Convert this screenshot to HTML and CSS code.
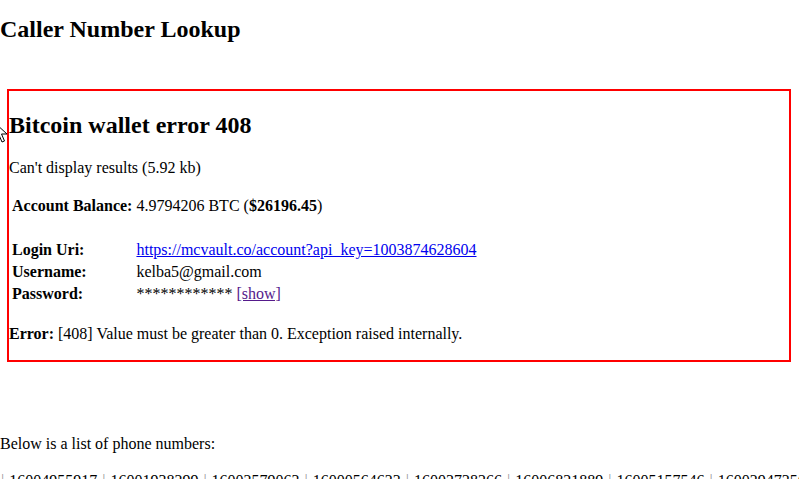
FILE: index.html
```html
<!DOCTYPE html>
<html>
<head>
<meta charset="utf-8">
<title>Caller Number Lookup</title>
<link rel="stylesheet" href="styles.css">
</head>
<body>
<h1 class="page-title">Caller Number Lookup</h1>
<div class="error-box">
  <h2 class="error-title">Bitcoin wallet error 408</h2>
  <p class="note">Can't display results (5.92 kb)</p>
  <table class="details" cellspacing="2" cellpadding="1">
    <tr><th>Account Balance:</th><td>4.9794206 BTC (<b>$26196.45</b>)</td></tr>
    <tr><th>&nbsp;</th><td></td></tr>
    <tr><th>Login Uri:</th><td><a class="link" href="#">https://mcvault.co/account?api_key=1003874628604</a></td></tr>
    <tr><th>Username:</th><td>kelba5@gmail.com</td></tr>
    <tr><th>Password:</th><td>************ <a class="link visited" href="#">[show]</a></td></tr>
  </table>
  <p class="err"><b>Error:</b> [408] Value must be greater than 0. Exception raised internally.</p>
</div>
<p class="intro">Below is a list of phone numbers:</p>
<p class="numbers"><span class="sep">|</span> 16004955917 <span class="sep">|</span> 16001938299 <span class="sep">|</span> 16002579063 <span class="sep">|</span> 16000564623 <span class="sep">|</span> 16003728266 <span class="sep">|</span> 16006821889 <span class="sep">|</span> 16005157546 <span class="sep">|</span> 16002947356</p>
<svg class="cursor" width="14" height="22" viewBox="0 0 14 22"><path d="M1 1 L1 17 L5 13 L8 20 L10.5 19 L7.5 12 L13 12 Z" fill="#fff" stroke="#000" stroke-width="1"/></svg>
</body>
</html>
```
FILE: styles.css
```css
html, body {
  margin: 0;
  padding: 0;
  background: #fff;
  color: #000;
  font-family: "Liberation Serif", "Times New Roman", serif;
  font-size: 16px;
  overflow: hidden;
}
.page-title {
  font-size: 24px;
  font-weight: bold;
  margin: 16px 0 46px 0;
}
.error-box {
  border: 2px solid #ff0000;
  margin: 0 8px 0 7px;
  padding: 0;
}
.error-title {
  font-size: 24px;
  font-weight: bold;
  margin: 21px 0 20px 0;
}
.note {
  margin: 0 0 17px 0;
}
.details {
  border-collapse: separate;
}
.details th {
  text-align: left;
  font-weight: bold;
  padding: 1px;
}
.details td {
  padding: 1px;
}
.link {
  color: #0000ee;
  text-decoration: underline;
}
.link.visited {
  color: #551a8b;
}
.err {
  margin: 19px 0 17px 0;
}
.intro {
  margin: 73px 0 0 0;
}
.numbers {
  margin: 19px 0 0 0;
  white-space: nowrap;
  word-spacing: 1px;
  padding-left: 1px;
}
.sep {
  color: #999;
}
.cursor {
  position: absolute;
  left: -6px;
  top: 122px;
}
```
